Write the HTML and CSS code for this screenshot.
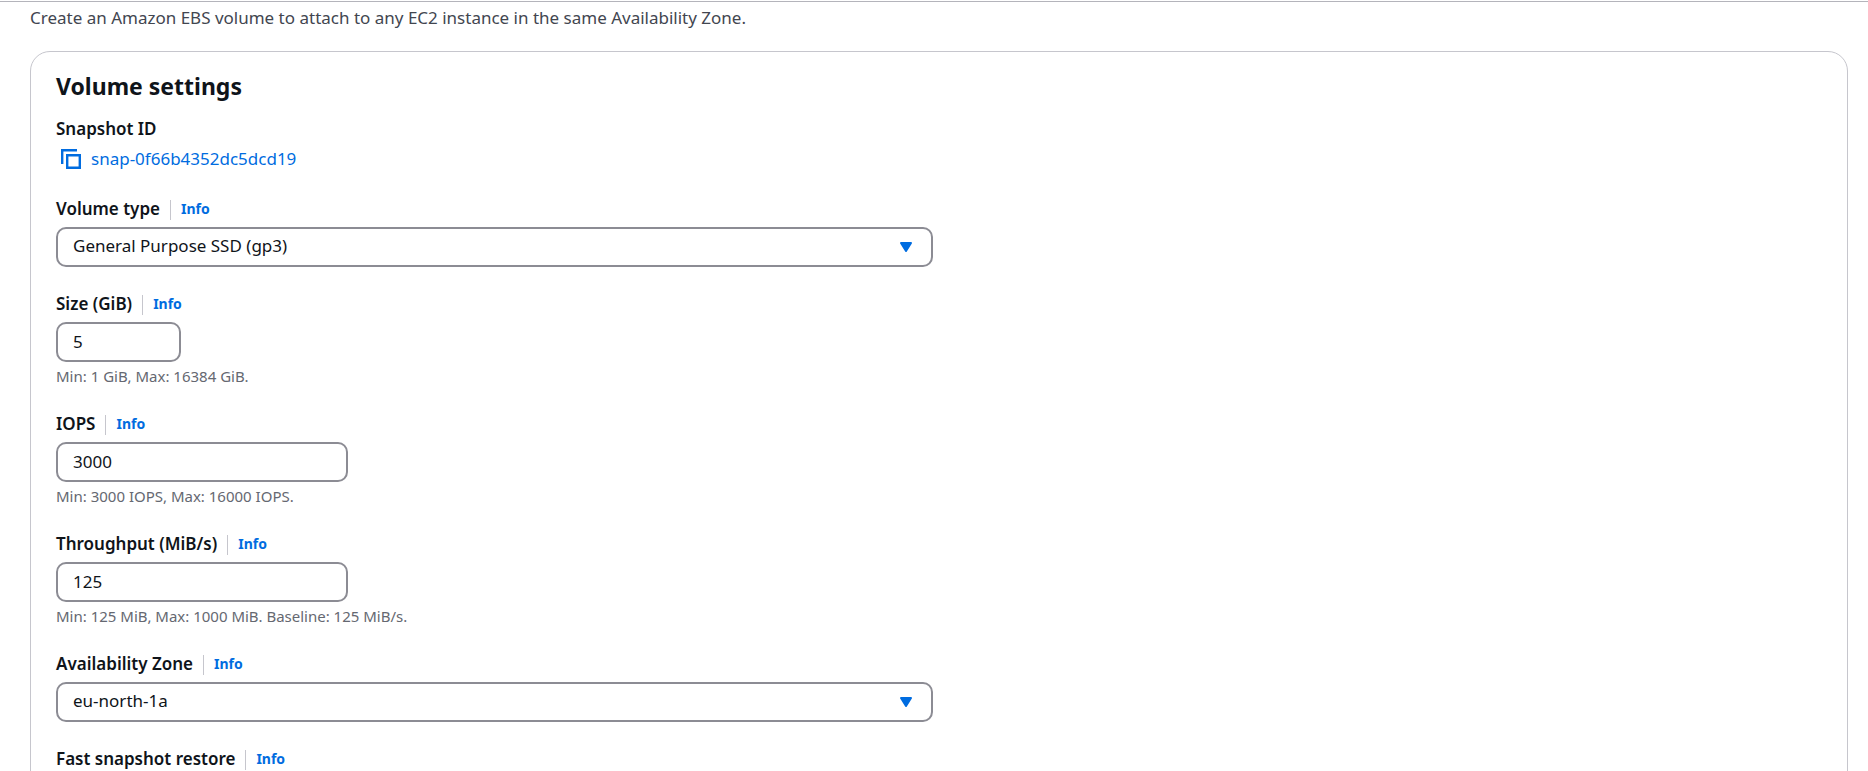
FILE: index.html
```html
<!DOCTYPE html>
<html lang="en">
<head>
<meta charset="utf-8">
<title>Create volume</title>
<link rel="stylesheet" href="styles.css">
</head>
<body>
<main class="page">
  <p class="intro">Create an Amazon EBS volume to attach to any EC2 instance in the same Availability Zone.</p>
  <section class="card">
    <h2 class="card-title">Volume settings</h2>
    <form class="form">
      <div class="field">
        <div class="field-head"><span class="label">Snapshot ID</span></div>
        <div class="snapshot">
          <button class="copy" type="button" aria-label="Copy snapshot ID">
            <svg width="21" height="21" viewBox="0 0 21 21" fill="none" stroke="currentColor" stroke-width="2.4"><path d="M1.2 15V1.2H16"/><path d="M6.2 6.2h12.6v12.6H6.2z"/></svg>
          </button>
          <a class="link" href="#">snap-0f66b4352dc5dcd19</a>
        </div>
      </div>
      <div class="field">
        <div class="field-head"><label class="label" for="type">Volume type</label><a class="info" href="#">Info</a></div>
        <div class="select-wrap">
          <select class="control" id="type"><option>General Purpose SSD (gp3)</option></select>
          <svg class="caret" width="14" height="12" viewBox="0 0 14 12"><path d="M2 2h10L7 10z" fill="currentColor" stroke="currentColor" stroke-width="2" stroke-linejoin="round"/></svg>
        </div>
      </div>
      <div class="field">
        <div class="field-head"><label class="label" for="size">Size (GiB)</label><a class="info" href="#">Info</a></div>
        <input class="control control-small" id="size" type="text" value="5">
        <p class="hint">Min: 1 GiB, Max: 16384 GiB.</p>
      </div>
      <div class="field">
        <div class="field-head"><label class="label" for="iops">IOPS</label><a class="info" href="#">Info</a></div>
        <input class="control control-medium" id="iops" type="text" value="3000">
        <p class="hint">Min: 3000 IOPS, Max: 16000 IOPS.</p>
      </div>
      <div class="field">
        <div class="field-head"><label class="label" for="throughput">Throughput (MiB/s)</label><a class="info" href="#">Info</a></div>
        <input class="control control-medium" id="throughput" type="text" value="125">
        <p class="hint">Min: 125 MiB, Max: 1000 MiB. Baseline: 125 MiB/s.</p>
      </div>
      <div class="field">
        <div class="field-head"><label class="label" for="zone">Availability Zone</label><a class="info" href="#">Info</a></div>
        <div class="select-wrap">
          <select class="control" id="zone"><option>eu-north-1a</option></select>
          <svg class="caret" width="14" height="12" viewBox="0 0 14 12"><path d="M2 2h10L7 10z" fill="currentColor" stroke="currentColor" stroke-width="2" stroke-linejoin="round"/></svg>
        </div>
      </div>
      <div class="field">
        <div class="field-head"><span class="label">Fast snapshot restore</span><a class="info" href="#">Info</a></div>
      </div>
    </form>
  </section>
</main>
</body>
</html>
```
FILE: styles.css
```css
* { box-sizing: border-box; }
body {
  margin: 0;
  height: 100vh;
  overflow: hidden;
  background: #fff;
  color: #0f141a;
  font-family: "Noto Sans", "Open Sans", sans-serif;
  font-size: 17px;
  line-height: 25px;
}
p, h2 { margin: 0; }
a { color: #006ce0; text-decoration: none; }
.page { padding: 5px 20px 0 30px; position: relative; }
.page::before {
  content: "";
  position: absolute;
  top: 1px;
  left: 0;
  right: 0;
  height: 1px;
  background: #b4b4bb;
}
.intro { color: #424650; }
.card {
  margin-top: 21px;
  min-height: 100vh;
  padding: 20px 25px;
  border: 1px solid #c6c6cd;
  border-radius: 20px;
}
.card-title { padding-bottom: 2px; font-size: 23px; line-height: 28px; font-weight: 700; }
.form { display: flex; flex-direction: column; gap: 25px; margin-top: 15px; }
.field { display: flex; flex-direction: column; align-items: flex-start; gap: 5px; }
.field-head { display: flex; align-items: center; gap: 10px; }
.label, .link { display: block; padding-bottom: 2px; line-height: 23px; }
.label { font-weight: 650; }
.info {
  padding: 0 0 2px 10px;
  border-left: 1px solid #c6c6cd;
  font-size: 14px;
  line-height: 18px;
  font-weight: 700;
}
.snapshot { display: flex; align-items: center; gap: 9px; padding-left: 5px; }
.copy {
  display: flex;
  padding: 0;
  border: 0;
  background: none;
  color: #006ce0;
  cursor: pointer;
}
.control {
  width: 100%;
  height: 40px;
  padding: 0 15px 2px;
  border: 2px solid #8c8c94;
  border-radius: 10px;
  background: #fff;
  color: inherit;
  font: inherit;
  appearance: none;
}
select.control { padding-bottom: 4px; }
.control-small { width: 125px; }
.control-medium { width: 292px; }
.select-wrap { position: relative; width: 100%; max-width: 877px; display: flex; }
.caret { position: absolute; right: 20px; top: 14px; color: #006ce0; pointer-events: none; }
.hint { padding-bottom: 2px; color: #656871; font-size: 15px; line-height: 18px; }
```
